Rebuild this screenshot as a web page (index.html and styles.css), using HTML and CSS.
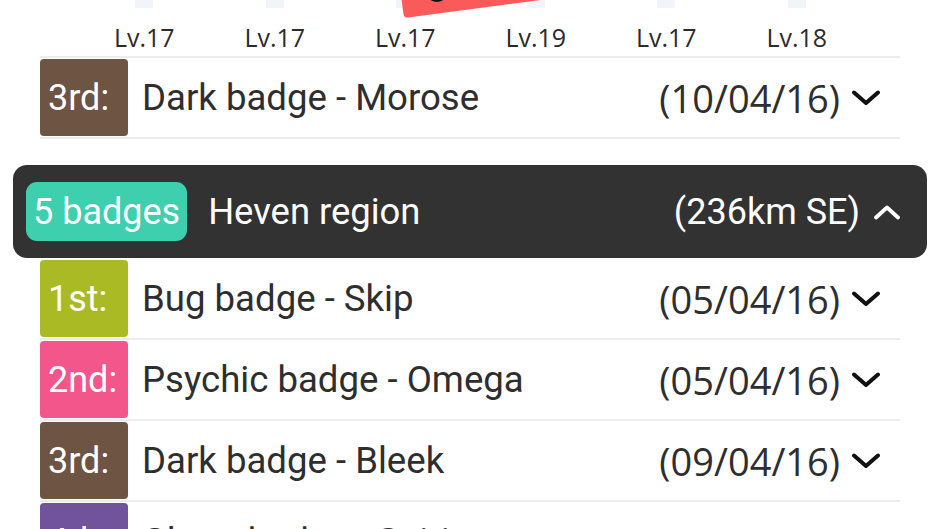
FILE: index.html
```html
<!DOCTYPE html>
<html>
<head>
<meta charset="utf-8">
<link rel="stylesheet" href="styles.css">
</head>
<body>
<div class="page">
  <div class="topstrip">
    <span class="thumb"></span><span class="thumb"></span><span class="thumb"></span><span class="thumb"></span><span class="thumb"></span><span class="thumb"></span>
  </div>
  <div class="ribbon"><span class="ribbon-text">St</span></div>

  <div class="list">
    <div class="levels">
      <span class="lv">Lv.17</span>
      <span class="lv">Lv.17</span>
      <span class="lv">Lv.17</span>
      <span class="lv">Lv.19</span>
      <span class="lv">Lv.17</span>
      <span class="lv">Lv.18</span>
    </div>
    <div class="row">
      <span class="rank dark">3rd:</span>
      <span class="name">Dark badge - Morose</span>
      <span class="date">(10/04/16)</span>
      <svg class="chev" viewBox="0 0 28 16" width="28" height="16"><polyline points="2,2.5 14,13 26,2.5" fill="none" stroke="#111" stroke-width="4" stroke-linecap="round" stroke-linejoin="round"/></svg>
    </div>
  </div>

  <div class="region">
    <span class="pill">5 badges</span>
    <span class="region-name">Heven region</span>
    <span class="dist">(236km SE)</span>
    <svg class="chev-up" viewBox="0 0 26 16" width="26" height="16"><polyline points="2,13.5 13,3.5 24,13.5" fill="none" stroke="#fff" stroke-width="3.8" stroke-linecap="round" stroke-linejoin="round"/></svg>
  </div>

  <div class="list list-after">
    <div class="row">
      <span class="rank bug">1st:</span>
      <span class="name">Bug badge - Skip</span>
      <span class="date">(05/04/16)</span>
      <svg class="chev" viewBox="0 0 28 16" width="28" height="16"><polyline points="2,2.5 14,13 26,2.5" fill="none" stroke="#111" stroke-width="4" stroke-linecap="round" stroke-linejoin="round"/></svg>
    </div>
    <div class="row">
      <span class="rank psychic">2nd:</span>
      <span class="name">Psychic badge - Omega</span>
      <span class="date">(05/04/16)</span>
      <svg class="chev" viewBox="0 0 28 16" width="28" height="16"><polyline points="2,2.5 14,13 26,2.5" fill="none" stroke="#111" stroke-width="4" stroke-linecap="round" stroke-linejoin="round"/></svg>
    </div>
    <div class="row">
      <span class="rank dark">3rd:</span>
      <span class="name">Dark badge - Bleek</span>
      <span class="date">(09/04/16)</span>
      <svg class="chev" viewBox="0 0 28 16" width="28" height="16"><polyline points="2,2.5 14,13 26,2.5" fill="none" stroke="#111" stroke-width="4" stroke-linecap="round" stroke-linejoin="round"/></svg>
    </div>
    <div class="row">
      <span class="rank ghost">4th:</span>
      <span class="name">Ghost badge - Spirit</span>
      <span class="date">(10/04/16)</span>
      <svg class="chev" viewBox="0 0 28 16" width="28" height="16"><polyline points="2,2.5 14,13 26,2.5" fill="none" stroke="#111" stroke-width="4" stroke-linecap="round" stroke-linejoin="round"/></svg>
    </div>
  </div>
</div>
</body>
</html>
```

FILE: styles.css
```css
html, body {
  margin: 0;
  padding: 0;
  background: #ffffff;
}

.page {
  position: relative;
  width: 940px;
  height: 529px;
  overflow: hidden;
  font-family: Roboto, "Noto Sans", sans-serif;
  color: #2e2e2e;
}

.topstrip {
  position: absolute;
  top: 0;
  left: 79px;
  display: grid;
  grid-template-columns: repeat(6, 130.5px);
}

.thumb {
  display: block;
  justify-self: center;
  width: 18px;
  height: 8px;
  background: #f1f4f8;
}

.ribbon {
  position: absolute;
  top: -38px;
  left: 404px;
  width: 170px;
  height: 56px;
  background: #fa5a5a;
  border-radius: 4px;
  transform: rotate(-7.5deg);
  transform-origin: left bottom;
  overflow: hidden;
}

.ribbon-text {
  display: block;
  margin: 19px 0 0 26px;
  font-family: Roboto, sans-serif;
  font-weight: 900;
  font-size: 30px;
  line-height: 30px;
  color: #111;
}

.list {
  margin: 0 40px;
}

.levels {
  box-sizing: border-box;
  height: 58px;
  padding-left: 39px;
  display: grid;
  grid-template-columns: repeat(6, 130.5px);
  align-items: end;
  border-bottom: 2px solid #ececec;
}

.lv {
  justify-self: center;
  font-family: "Liberation Sans Narrow", "Open Sans", sans-serif;
  font-size: 25px;
  line-height: 30px;
  padding-bottom: 4px;
  color: #2b2b2b;
}

.row {
  display: flex;
  align-items: center;
  padding: 1px 20px 1px 0;
  border-bottom: 2px solid #ececec;
}

.rank {
  box-sizing: border-box;
  width: 88px;
  height: 77px;
  padding-left: 8px;
  border-radius: 4px;
  display: flex;
  align-items: center;
  font-size: 36px;
  color: #ffffff;
}

.dark { background: #6e5443; }
.bug { background: #a9ba25; }
.psychic { background: #f2568b; }
.ghost { background: #70539a; }

.name {
  margin-left: 14px;
  flex: 1;
  font-size: 36.6px;
  color: #2e2e2e;
}

.date {
  font-family: "Open Sans", "Noto Sans", sans-serif;
  font-size: 38px;
  color: #2e2e2e;
}

.chev {
  margin-left: 12px;
  display: block;
}

.region {
  margin: 26px 13px 0 13px;
  height: 93px;
  box-sizing: border-box;
  background: #323232;
  border-radius: 14px;
  display: flex;
  align-items: center;
  padding: 0 27px 0 13px;
  color: #ffffff;
}

.pill {
  background: #3dcfae;
  border-radius: 11px;
  height: 59px;
  padding: 0 7px;
  display: flex;
  align-items: center;
  font-size: 36px;
}

.region-name {
  margin-left: 21px;
  flex: 1;
  font-size: 36.4px;
}

.dist {
  font-size: 36px;
}

.chev-up {
  margin-left: 14px;
  display: block;
}

.list-after {
  margin-top: 1px;
}
```
